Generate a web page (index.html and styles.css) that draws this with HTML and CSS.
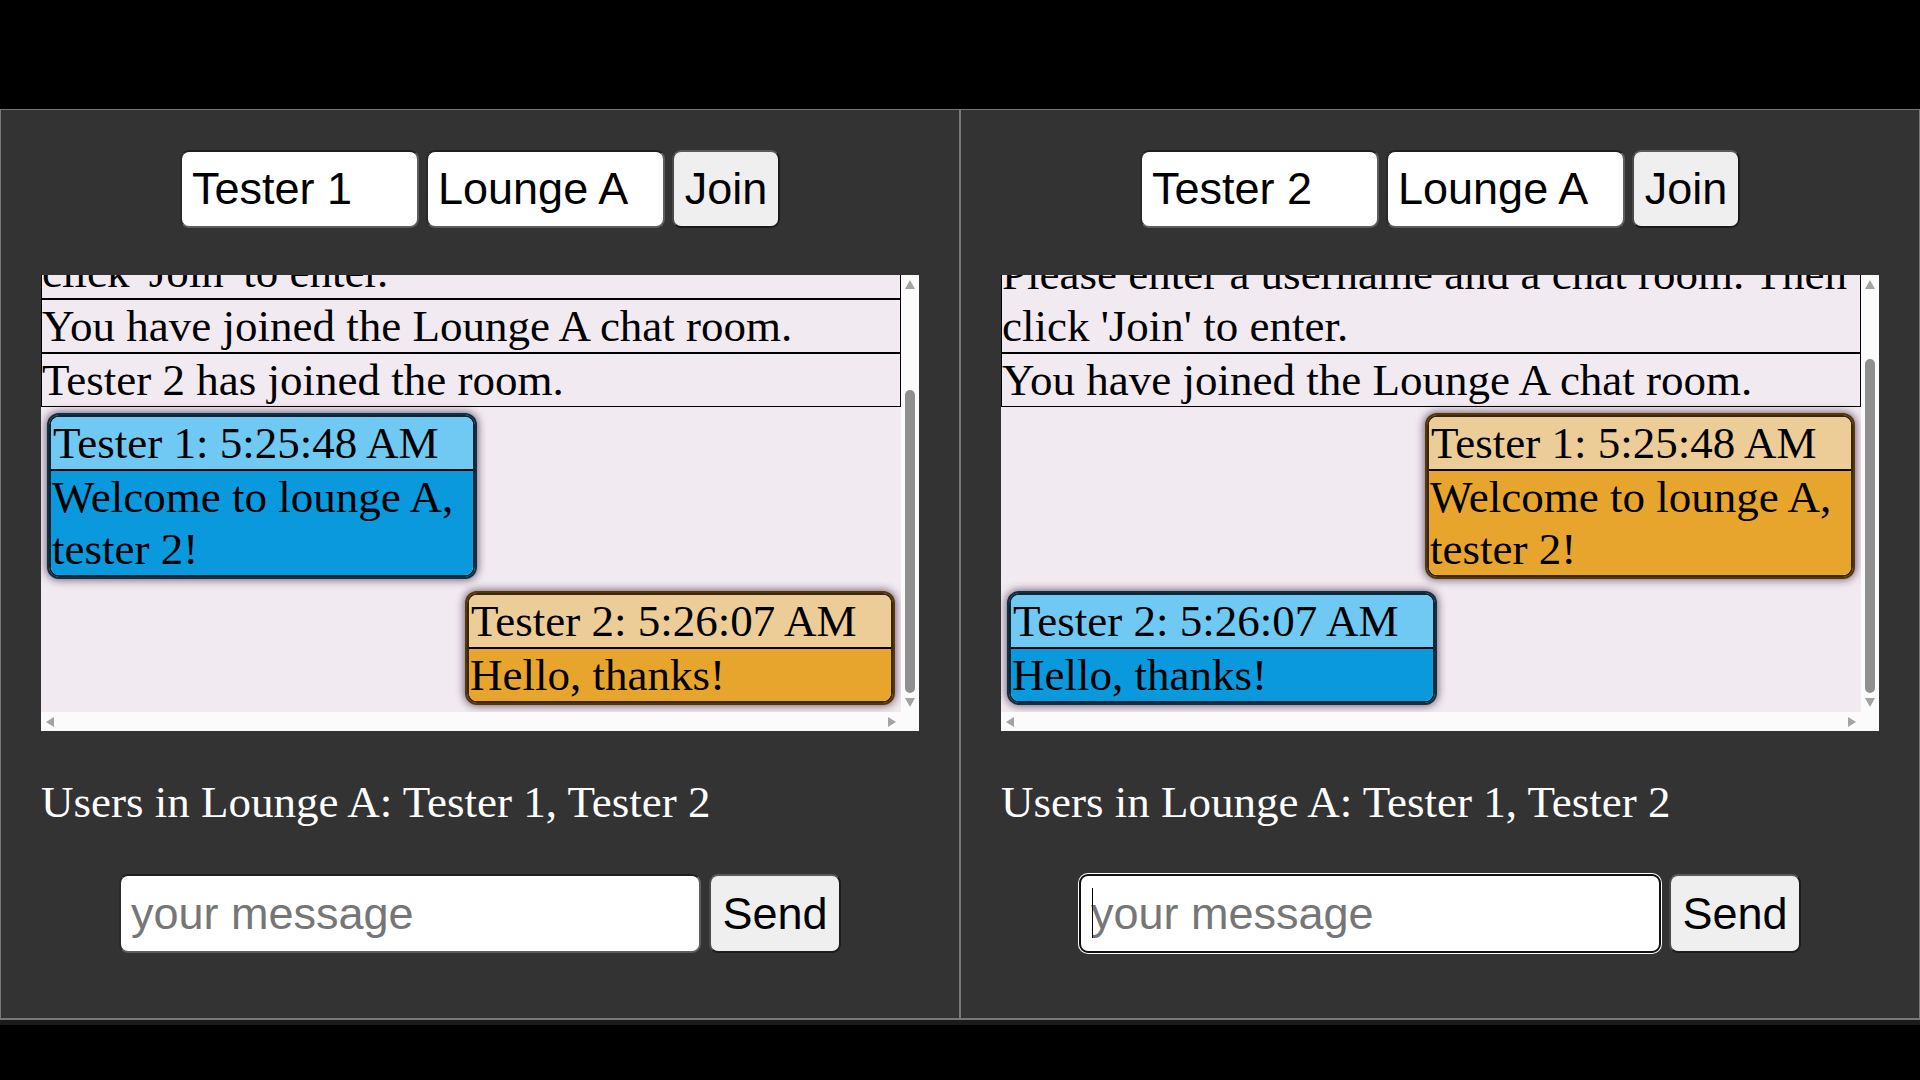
FILE: index.html
```html
<!DOCTYPE html>
<html lang="en">
<head>
<meta charset="utf-8">
<title>Chat rooms</title>
<link rel="stylesheet" href="styles.css">
</head>
<body>
<div class="screen">
  <section class="panel">
    <div class="join-row">
      <input class="field name" value="Tester 1">
      <input class="field room" value="Lounge A">
      <button class="btn join">Join</button>
    </div>
    <div class="chat">
      <div class="viewport">
        <div class="chat-inner">
          <div class="sys">Please enter a username and a chat room. Then click 'Join' to enter.</div>
          <div class="sys">You have joined the Lounge A chat room.</div>
          <div class="sys">Tester 2 has joined the room.</div>
          <div class="bubble mine">
            <div class="head">Tester 1: 5:25:48 AM</div>
            <div class="body">Welcome to lounge A, tester 2!</div>
          </div>
          <div class="bubble theirs">
            <div class="head">Tester 2: 5:26:07 AM</div>
            <div class="body">Hello, thanks!</div>
          </div>
        </div>
      </div>
      <div class="vbar">
        <span class="arrow up"></span>
        <span class="thumb" style="height: 303px"></span>
        <span class="arrow down"></span>
      </div>
      <div class="hbar">
        <span class="arrow left"></span>
        <span class="arrow right"></span>
      </div>
      <div class="corner"></div>
    </div>
    <p class="users">Users in Lounge A: Tester 1, Tester 2</p>
    <div class="send-row">
      <span class="msg-wrap"><input class="field msg" placeholder="your message"></span>
      <button class="btn send">Send</button>
    </div>
  </section>
  <section class="panel">
    <div class="join-row">
      <input class="field name" value="Tester 2">
      <input class="field room" value="Lounge A">
      <button class="btn join">Join</button>
    </div>
    <div class="chat">
      <div class="viewport">
        <div class="chat-inner">
          <div class="sys">Please enter a username and a chat room. Then click 'Join' to enter.</div>
          <div class="sys">You have joined the Lounge A chat room.</div>
          <div class="bubble theirs">
            <div class="head">Tester 1: 5:25:48 AM</div>
            <div class="body">Welcome to lounge A, tester 2!</div>
          </div>
          <div class="bubble mine">
            <div class="head">Tester 2: 5:26:07 AM</div>
            <div class="body">Hello, thanks!</div>
          </div>
        </div>
      </div>
      <div class="vbar">
        <span class="arrow up"></span>
        <span class="thumb" style="height: 334px"></span>
        <span class="arrow down"></span>
      </div>
      <div class="hbar">
        <span class="arrow left"></span>
        <span class="arrow right"></span>
      </div>
      <div class="corner"></div>
    </div>
    <p class="users">Users in Lounge A: Tester 1, Tester 2</p>
    <div class="send-row">
      <span class="msg-wrap"><input class="field msg focused" placeholder="your message"><span class="caret"></span></span>
      <button class="btn send">Send</button>
    </div>
  </section>
</div>
</body>
</html>
```
FILE: styles.css
```css
html, body {
  margin: 0;
  padding: 0;
  background: #000;
}

.screen {
  margin-top: 109px;
  display: grid;
  grid-template-columns: 960px 960px;
  border-bottom: 5px solid #1b1b1b;
}

.panel {
  box-sizing: border-box;
  height: 911px;
  background: #333333;
  border: 1px solid #787878;
  border-bottom-width: 2px;
  padding: 40px 40px 0 40px;
  font-family: "Liberation Serif", "Times New Roman", serif;
  font-size: 45px;
}

.join-row,
.send-row {
  display: flex;
  justify-content: center;
  align-items: stretch;
}

.join-row {
  gap: 7px;
  height: 78px;
}

.send-row {
  gap: 8px;
  height: 79px;
  margin-top: 46px;
}

.field {
  box-sizing: border-box;
  height: 100%;
  margin: 0;
  padding: 0 10px;
  font-family: "Liberation Sans", Arial, sans-serif;
  font-size: 45px;
  color: #000;
  background: #fff;
  border: 2px solid;
  border-color: #1e1e1e #5e5e5e #5e5e5e #2a2a2a;
  border-radius: 9px;
  outline: none;
}

.field::placeholder {
  color: #767676;
}

.name, .room {
  width: 239px;
}

.msg-wrap {
  position: relative;
  display: block;
  width: 582px;
}

.msg {
  width: 100%;
}

.msg.focused {
  border-color: #101010;
  box-shadow: 0 0 0 1px #ffffff;
}

.caret {
  position: absolute;
  left: 13px;
  top: 14px;
  width: 1px;
  height: 50px;
  background: #000;
}

.btn {
  box-sizing: border-box;
  height: 100%;
  margin: 0;
  padding: 0;
  font-family: "Liberation Sans", Arial, sans-serif;
  font-size: 45px;
  color: #000;
  background: #efefef;
  border: 2px solid;
  border-color: #5a5a5a #1c1c1c #1c1c1c #4a4a4a;
  border-radius: 9px;
}

.join { width: 108px; }
.send { width: 132px; }

/* chat box with drawn scrollbars */
.chat {
  height: 456px;
  margin-top: 47px;
  display: grid;
  grid-template-columns: 1fr 18px;
  grid-template-rows: 1fr 19px;
  background: #fbfbfb;
}

.viewport {
  background: #f1eaf1;
  overflow: hidden;
  display: flex;
  flex-direction: column;
  justify-content: flex-end;
}

.chat-inner {
  display: flex;
  flex-direction: column;
  align-items: stretch;
  padding-bottom: 1px;
}

.vbar {
  display: flex;
  flex-direction: column;
  align-items: center;
  justify-content: space-between;
  background: #fbfbfb;
}

.hbar {
  display: flex;
  align-items: center;
  justify-content: space-between;
  padding: 0 5px;
  background: #fbfbfb;
}

.corner {
  background: #fbfbfb;
}

.thumb {
  display: block;
  width: 10px;
  margin-top: auto;
  margin-bottom: 5px;
  border-radius: 5px;
  background: #8f8f8f;
}

.arrow {
  display: block;
  width: 0;
  height: 0;
  border-style: solid;
  border-color: transparent;
}

.arrow.up {
  margin-top: 5px;
  border-width: 0 5px 9px 5px;
  border-bottom-color: #a3a3a3;
}

.arrow.down {
  margin-bottom: 5px;
  border-width: 9px 5px 0 5px;
  border-top-color: #a3a3a3;
}

.arrow.left {
  border-width: 5px 8px 5px 0;
  border-right-color: #a3a3a3;
}

.arrow.right {
  border-width: 5px 0 5px 8px;
  border-left-color: #a3a3a3;
}

.sys {
  border: 1px solid #000;
  line-height: 52px;
  color: #000;
}

.bubble {
  box-sizing: border-box;
  width: 426px;
  margin: 8px;
  border: 2px solid #111;
  border-radius: 10px;
  overflow: hidden;
  line-height: 52px;
  color: #000;
}

.bubble .head {
  border-bottom: 2px solid #000;
  padding-left: 2px;
}

.bubble .body {
  padding-left: 1px;
}

.mine {
  align-self: flex-start;
  border-color: #062536;
  box-shadow: 0 0 0 2px #0f2f42, 0 0 8px 3px rgba(30, 0, 30, 0.6);
}

.mine .head { background: #6fc9f3; }
.mine .body { background: #0999dc; }

.theirs {
  align-self: flex-end;
  border-color: #3a2600;
  box-shadow: 0 0 0 2px #553807, 0 0 8px 3px rgba(30, 0, 30, 0.6);
}

.theirs .head { background: #eccd98; }
.theirs .body { background: #e8a52d; }

.users {
  margin: 45px 0 0 0;
  color: #fff;
  line-height: 52px;
}
```
